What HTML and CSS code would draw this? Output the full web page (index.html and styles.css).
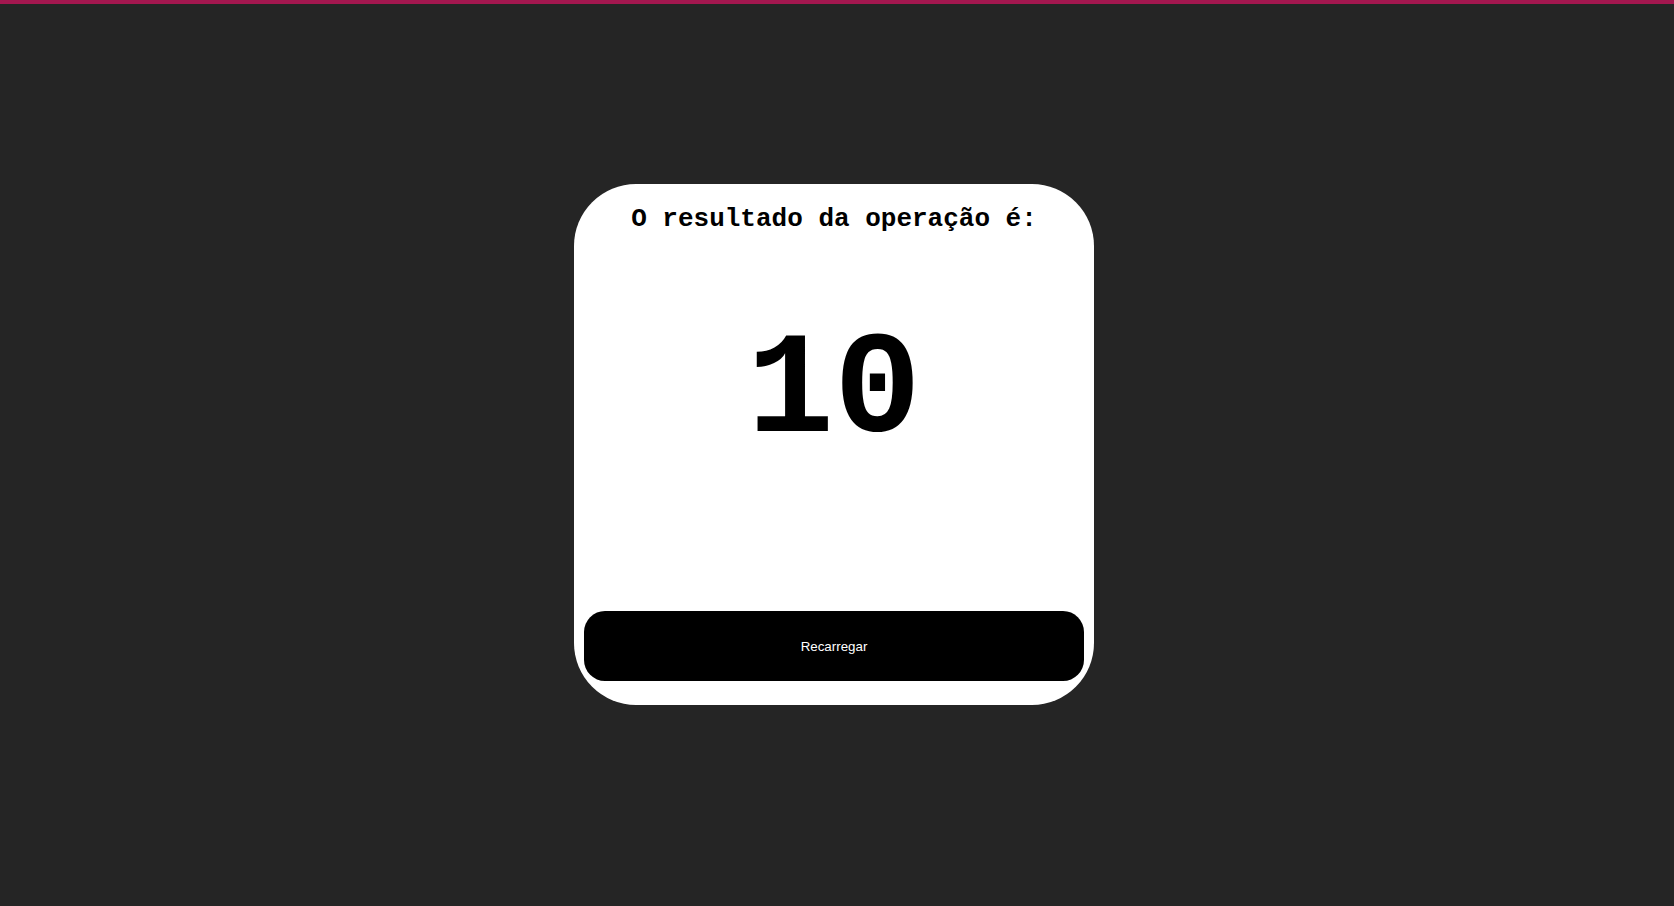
FILE: index.html
```html
<!DOCTYPE html>
<html lang="pt">
<head>
<meta charset="utf-8">
<link rel="stylesheet" href="styles.css">
<title>Resultado</title>
</head>
<body>
<div class="topbar"></div>
<main class="page">
  <section class="card">
    <h1 class="title">O resultado da operação é:</h1>
    <div class="result">10</div>
    <button class="reload">Recarregar</button>
  </section>
</main>
</body>
</html>
```
FILE: styles.css
```css
html, body {
  margin: 0;
  padding: 0;
  height: 100%;
}
body {
  background: #252525;
  font-family: "Liberation Sans", Arial, sans-serif;
}
.topbar {
  height: 4px;
  background: #a3174f;
}
.page {
  display: flex;
  justify-content: center;
  padding: 180px 6px 0 0;
}
.card {
  box-sizing: border-box;
  width: 520px;
  height: 521px;
  background: #ffffff;
  border-radius: 62px;
  padding: 10px 10px 24px;
  display: flex;
  flex-direction: column;
  align-items: center;
}
.title {
  margin: 10px 0 0;
  font-family: "Liberation Mono", "Courier New", monospace;
  font-weight: bold;
  font-size: 26px;
  line-height: 30px;
  color: #000;
}
.result {
  flex: 1;
  font-family: "Liberation Mono", "Courier New", monospace;
  font-weight: bold;
  font-size: 145px;
  line-height: 1;
  color: #000;
  padding-top: 86px;
}
.reload {
  width: 500px;
  height: 70px;
  border: none;
  border-radius: 21px;
  background: #000;
  color: #fff;
  font-family: "Liberation Sans", Arial, sans-serif;
  font-size: 13.33px;
}
```
